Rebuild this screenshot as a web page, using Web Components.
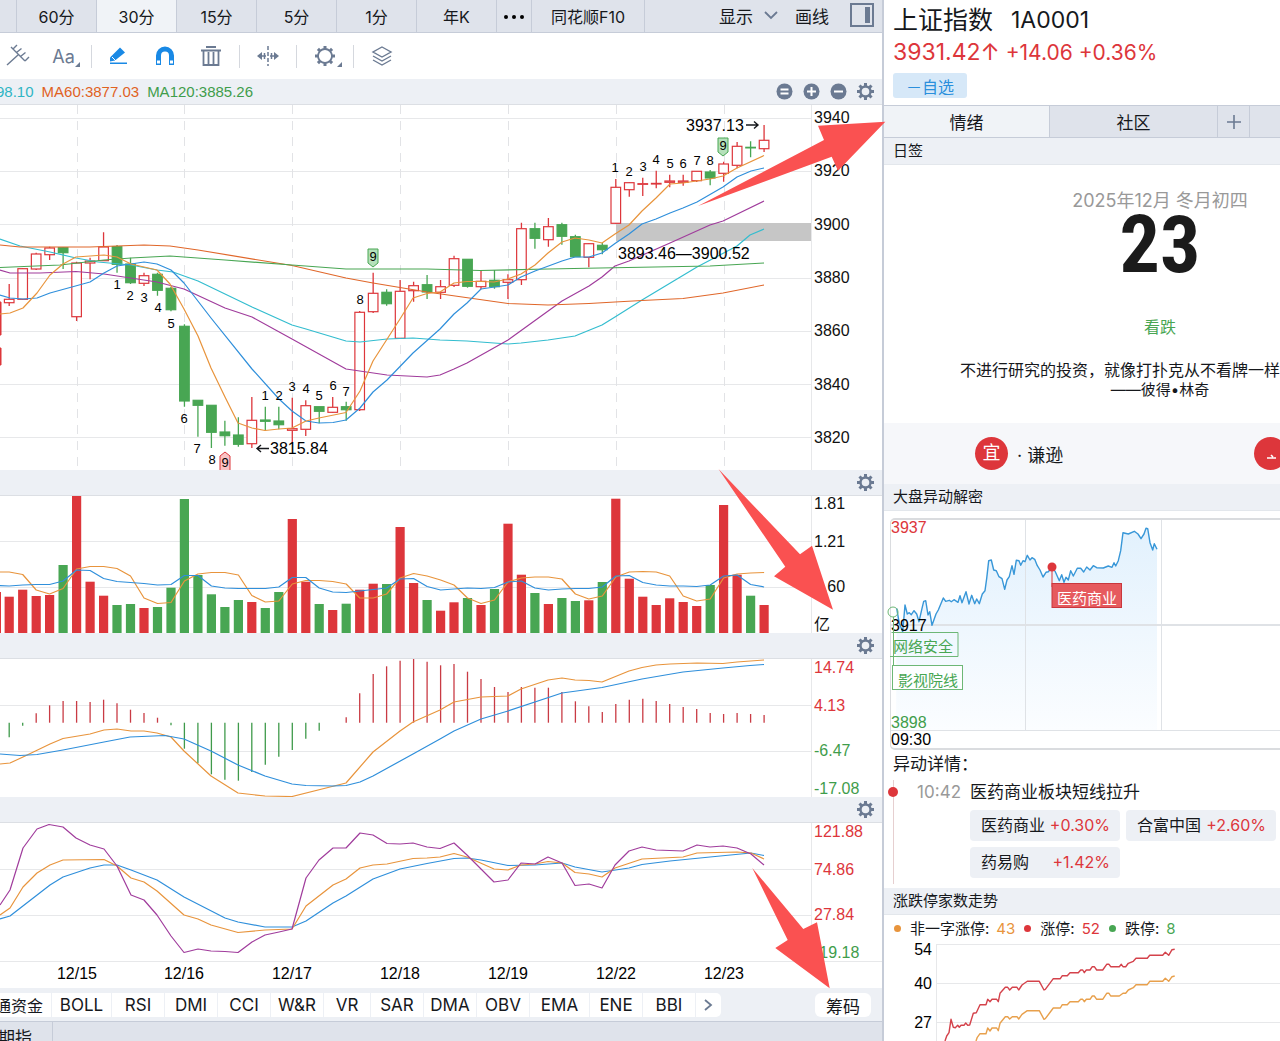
<!DOCTYPE html>
<html lang="zh-CN">
<head>
<meta charset="utf-8">
<meta name="viewport" content="width=device-width, initial-scale=1">
<title>上证指数 1A0001</title>
<style>
  :root {
    --red: #dd363b; --green: #48a653;
    --ink: #16181c; --slate: #6b7a92; --bar: #edf0f5; --tab: #dfe3eb; --line: #c6ccd8; --grid: #e7e8ea;
    --ui: Inter, "Noto Sans CJK SC", sans-serif;
    --num: "Liberation Sans", "Noto Sans CJK SC", sans-serif;
  }
  body { margin: 0; background: #fff; color: var(--ink); font-family: var(--ui); }
</style>
</head>
<body>
<stock-app></stock-app>
<script>
const BASE = `*{box-sizing:border-box} button{font:inherit;color:inherit;border:0;background:none;padding:0;margin:0;white-space:nowrap;cursor:pointer} svg{display:block}`;
function define(name, css, html, ready) {
  const tpl = document.createElement('template');
  tpl.innerHTML = `<style>${BASE}${css}</style>${html}`;
  customElements.define(name, class extends HTMLElement {
    constructor() {
      super();
      this.attachShadow({ mode: 'open' }).append(tpl.content.cloneNode(true));
    }
    connectedCallback() { if (ready) ready(this.shadowRoot, this); }
  });
}
const GEAR = (() => {
  let teeth = '';
  for (let a = 0; a < 360; a += 45) teeth += `<rect x="8" y="1" width="3" height="4" transform="rotate(${a} 9.5 9.5)"/>`;
  return `<svg width="19" height="19" viewBox="0 0 19 19" fill="#6b7a92"><circle cx="9.5" cy="9.5" r="5" fill="none" stroke="#6b7a92" stroke-width="2.4"/>${teeth}</svg>`;
})();

/* Chart helpers */
const RED = '#dd363b', GREEN = '#48a653', ORANGE = '#e8943c', BLUE = '#2f8fdb', PURPLE = '#a03c9c';
const X = i => 9.2 + 13.48 * i;
const line = (pts, color, w = 1.2) => `<polyline points="${pts}" fill="none" stroke="${color}" stroke-width="${w}" stroke-linejoin="round"/>`;
const series = (ys, color, first) => line(ys.map((y, k) => `${X(k + first).toFixed(1)},${y}`).join(' '), color);
const hline = (y, x2 = 811) => `<path d="M0 ${y}H${x2}" stroke="#e7e8ea"/>`;
const plot = (top, h, body) => `<svg class="plot" viewBox="0 ${top} 811 ${h}">${body}</svg>`;

/* high, body top, body bottom, low, direction */
const candles = [
[284,299.3,302.7,306,'r'],[268,268.7,299.3,300,'r'],[252.7,254,269,270,'r'],[246.7,248,254.7,260,'r'],[247,247.7,252.7,269,'g'],
[261.7,263,316.7,321,'r'],[257.7,261,263,279.3,'r'],[232.3,247,260.7,261,'r'],[245,246.7,264.3,272.7,'g'],[257.7,264,282.7,284,'g'],
[272.7,275.7,283.3,286,'r'],[272.7,274.3,290.3,295.7,'g'],[286.7,288.3,309.7,311.3,'g'],[324.3,326.3,401,406.7,'g'],[400.3,400.3,405.3,436.7,'g'],
[405.3,405.3,432.3,448,'g'],[420.7,432,435.7,445.7,'g'],[417.3,435,444.3,446.7,'g'],[397,420.3,443.7,448,'r'],[406.7,420,421.3,430.7,'g'],
[406.7,421,424.7,429.3,'g'],[397.7,428.7,430.3,442.7,'r'],[400.3,405.7,429.3,436,'r'],[406.7,406.7,411.3,423.3,'g'],[397,407.3,412.3,413,'r'],
[401.7,406.7,409.7,420.7,'g'],[311,312.3,409.7,411,'r'],[272.7,293.3,311.7,313,'r'],[289.3,292.3,303.7,305.7,'g'],[280,291.3,338.3,339,'r'],
[281.7,285.7,290.7,301.7,'r'],[275,284.7,292,299,'g'],[280,286.7,292.3,299,'r'],[255.7,258.7,285.3,287,'r'],[259.3,259.3,286.3,287.7,'g'],
[270.7,281.3,286.7,289.3,'r'],[270,280.3,286.7,288.7,'g'],[274.3,279.7,282.3,299,'r'],[222.7,228.7,279.7,285,'r'],[222.7,228.7,238.3,248.7,'g'],
[218,226.7,239.7,246.7,'r'],[222.7,224.7,236.3,244.7,'g'],[234.7,236.7,256.7,257,'g'],[243,243.7,257.3,267.3,'r'],[242.7,245.3,249.7,254.3,'g'],
[179,187.3,223.3,224,'r'],[182,182.7,189.7,196.7,'r'],[177.7,183.7,184.3,196,'r'],[170.7,183.4,183.7,188.3,'r'],[174.7,181,182.3,187.3,'r'],
[174.7,181,182.3,185.7,'r'],[171,171.3,180.7,182,'r'],[170,172,178,185.3,'g'],[161.7,164,173.3,181.7,'r'],[142,146.3,165.3,168.3,'r'],
[141.3,147.3,147.9,157.3,'g'],[125,140.3,148.7,152,'r']];
const counts = [[1,117,289],[2,130,300],[3,144,302],[4,158,312],[5,171,328],[6,184,423],[7,197,453],[8,212,464],[1,265,400],[2,279,400],[3,292,391],[4,306,393],[5,319,400],[6,333,390],[7,346,396],[8,360,304],[1,615,172],[2,629,176],[3,643,171],[4,656,164],[5,670,168],[6,683,168],[7,697,165],[8,710,165],[9,373,261],[9,723,150],[9,225,467]];

function drawCandles() {
  let s = '';
  for (let y = 118; y < 440; y += 53.2) s += hline(Math.round(y) + .5);
  for (let k = 5; k < 57; k += 8) s += `<path d="M${Math.round(X(k)) + .5} 105V470" stroke="#e2e3e6" stroke-dasharray="9 7"/>`;
  s += `<rect x="616" y="223" width="195" height="18" fill="#c6c6c6"/>`;
  s += `<path d="M0 302h1v33h-1zM0 348h1v17h-1z" fill="${RED}" stroke="${RED}"/>`;
  candles.forEach(([hi, t, b, lo, c], i) => {
    const x = X(i), col = c === 'r' ? RED : GREEN, h = Math.max(b - t, .6);
    s += `<path d="M${x} ${hi}V${t}M${x} ${b}V${lo}" stroke="${col}" stroke-width="1.3"/>`;
    s += `<rect x="${x - 4.8}" y="${t}" width="9.6" height="${h}" fill="${c === 'r' ? '#fff' : col}" stroke="${col}" stroke-width="1.2"/>`;
  });
  s += line('0,239 20,246 50,252 76,258 98,262 131,265 157,270 173,272 198,281 252,307 292,325 306,329 346,341 360,342 387,339 413,338 440,340 467,341 494,343 508,344 521,343 548,340 575,336 602,325 615,317 642,300 697,267 737,246 750,235 764,229', '#33bdcf');
  s += line('0,270 10,273 40,273 76,271.5 104,274 157,282 184,289 225,308 252,317 292,339 346,369 387,375 427,377 440,375 454,369 467,363 508,340 562,301 589,286 602,277 615,266 629,261 670,243 710,225 723,221 764,201', PURPLE);
  s += line('0,245 20,247 90,247 144,245 170,246 198,250 292,265.5 346,278 373,283 427,292 508,303.5 548,305 589,303.5 615,302 642,300.5 683,298.5 723,293 764,285', '#e0672a');
  s += line('0,267.5 60,265 104,260 131,258 170,256 225,260 292,265 346,269 427,269 480,270.5 548,269 600,268 710,266 764,263', GREEN);
  s += line('0,295 10,298 23,299 37,298 50,293 90,282 104,273 117,266 131,264 144,262 157,264 171,270 184,283 211,318 252,369 279,399 292,411 306,421 319,423 333,422.5 346,420 360,408 373,392 387,380 413,353 440,329 454,314 467,303 481,289 508,285 521,277 535,271 562,261 575,257 589,257 602,253 615,243.5 629,234 642,224 656,219 670,213 683,208 697,202 723,187 737,177 751,171 764,168', BLUE);
  s += line('0,314 10,313 23,308 37,293 50,275 63,264 76,257 104,255 117,257 131,264 157,270 170,284 184,309 198,336 211,368 225,397 238,423 252,428 265,430.5 279,429 292,428 306,421 319,418 346,412.5 360,391 373,361 400,319 413,298 427,293.5 440,292 454,283 467,281.5 481,281.5 494,282 508,279 521,274 535,265 548,253 562,242 575,238 589,240 602,243 615,234 629,225 642,211 656,198 670,184 683,183 710,179 723,176 737,168 764,155.5', ORANGE);
  s += `<path d="M368 249h10v14l-5 4l-5-4zM718 138h10v14l-5 4l-5-4z" fill="#b5e0ba" stroke="${GREEN}"/><path d="M220 470V456l5-4l5 4v14" fill="#f9c3c4" stroke="${RED}"/>`;
  s += '<g font-size="13" text-anchor="middle">' + counts.map(([n, x, y]) => `<text x="${x}" y="${y}">${n}</text>`).join('') + '</g>';
  s += `<g font-size="16"><text x="686" y="131">3937.13</text><text x="618" y="259">3893.46—3900.52</text><text x="270" y="454">3815.84</text></g>`;
  s += `<path d="M746 125h12m-4-3.500l4 3.500l-4 3.500M269 448.500h-12m4-3.500l-4 3.500l4 3.500" fill="none" stroke="#16181c" stroke-width="1.400"/>`;
  return plot(105, 365, s);
}
function drawVolume() {
  const tops = [596.7,589.7,596,595,565,496,581.7,595.7,605,604,608,607,587.7,499,575,594.3,607,600,602,608,592,519,581.7,604,610,603.7,589.7,583.7,584,527,583,600,610.7,602.3,598,605,589,523.7,574.7,593,604,598,601,600.3,582,498.7,578.7,596.7,605,598.3,602,606,585,505,574.7,595.7,605];
  const dir = 'rrrrgrrrggrgggggggrggrrgrgrrgrrgrrgrgrrgrggrgrrrrrrrgrrgr';
  let s = hline(541.5) + hline(587.5) + `<rect x="0" y="592" width="1" height="41" fill="${RED}"/>`;
  tops.forEach((t, i) => s += `<rect x="${(X(i) - 4.6).toFixed(1)}" y="${t}" width="9.2" height="${633 - t}" fill="${dir[i] === 'r' ? RED : GREEN}"/>`);
  s += series([572,572,574.5,590,594,588.5,569,566.5,566.5,568.5,576,598,603.5,602.5,581,574,572.5,572.5,575,595.5,602,601,584,580.5,580.5,581.5,584,598,598,594,578,573.5,576,580,585,598,603.5,600,582,578,577,577,579,594,599,596,577,572,571.5,572,576,596,601,599,578,574,573,572.5], ORANGE, -1);
  s += series([585.5,586,585,584.5,584.5,581,570,570.5,578.5,581.5,582.5,583.5,585,584.5,575.5,575.5,586,588,588.5,588.5,588.5,587,577.5,577.5,588,592,592.5,591,589.5,588,579,578.5,586.5,590,589,588,588.5,587.5,582,581,588,590,589,588.5,588.5,587,576,575.5,582.5,585,586,586,586.5,585,576,575,584.5,587], BLUE, -1);
  return plot(496, 137, s);
}
function drawMacd() {
  const ends = [737.3,725.7,713.3,705.3,701,701,702,699.7,703.3,709.7,713,717.7,725.3,748.7,763.3,774.3,779.7,780.7,772,764.7,756.7,750,738.7,730.7,722.7,717.3,693.3,674,666.3,660.7,658.7,661.7,665.3,664,671.7,679,687,692,687,687.7,687.7,692,701.3,706.3,712,704,699.7,698.7,701,704,707,709,713,714,713,714,715];
  let s = hline(705.5) + hline(751.5);
  ends.forEach((e, i) => s += `<path d="M${X(i).toFixed(1)} 722.700V${e}" stroke="${e < 722.7 ? '#c93b44' : '#3f9a4b'}" stroke-width="1.300"/>`);
  s += line('0,764 10,763 23,757 50,744 63,738.5 90,734 104,730 117,729 131,731 144,731 157,733 171,737 184,751 211,776 238,793 265,796 292,796.5 346,783 373,752 400,731 413,722 440,710 454,702 481,697 508,696 521,689 548,680 562,678 575,680 589,680.5 602,682 629,671 642,667.5 656,665 670,664 697,663 723,663.5 737,662 764,660', ORANGE);
  s += line('0,754 20,755.5 37,754.5 63,750 104,742 130,737 165,735.5 184,739 211,751 238,765 265,776 292,784 306,785.5 333,786 346,785.5 360,782 373,776 413,754 440,739 454,731 481,719 508,711 562,693 602,687.5 642,679 683,672 723,668 750,665.5 764,664.5', BLUE);
  return plot(659, 138, s);
}
function drawKdj() {
  let s = hline(869.5) + hline(915.5);
  s += line('0,919 10,916 50,885 63,877 90,868 104,865 117,865 131,870 157,880 184,897 225,918 238,922 265,927 292,927 306,921 333,903 346,896 373,879 400,869 427,863.5 454,858.5 467,858 481,860 508,865.5 535,865 562,863 575,867 602,872 629,868 642,864.5 670,861 710,857 751,853 764,855.5', BLUE);
  s += line('0,915 10,908 23,887 37,873 50,865 63,860 104,859.5 117,866 131,878 144,882 157,891 184,915 198,919 211,925 238,932.5 265,930 292,929 306,906 333,885 346,879 360,868 373,865 387,864 413,858.5 427,858 440,857 454,853.5 467,857 494,869 508,870 521,865 535,864 548,861.5 562,863 575,872.5 589,874 602,877 615,868 642,859 683,857 697,853 737,852 751,853 764,859', ORANGE);
  s += line('0,905 10,890 23,848 37,829 49,824.5 63,827 76,838 90,845 104,849 117,866 131,895 144,900 157,915 171,936 184,952.5 198,949 211,951 225,951.5 238,952.5 252,942 265,935 279,932 292,929 306,878 319,860 333,848 346,848 360,833 373,835 387,843.5 400,844 413,843 427,847 440,848.5 454,843 467,855 481,869 494,882 508,880 521,863 535,864 548,857 562,863 575,885.5 589,884 602,888 615,865 629,851 642,847 656,850 683,851 697,845 710,847 723,846 737,848 751,854 764,865', PURPLE);
  return plot(823, 138, s);
}
const drawDates = () => plot(962, 26, '<g font-size="16" text-anchor="middle">' + ['12/15','12/16','12/17','12/18','12/19','12/22','12/23'].map((d, k) => `<text x="${X(5 + 8 * k).toFixed(0)}" y="979">${d}</text>`).join('') + '</g>');

define('chart-pane', `
  :host{display:flex;font-family:var(--num);color:#111;background:#fff}
  .plot{width:100%;height:auto;overflow:hidden}
  .area{flex:1;min-width:0}
  .axis{flex:0 0 71px;border-left:1px solid var(--grid);font-size:16px;line-height:16px;padding-left:2px}
  :host([kind=candles]) .axis{display:flex;flex-direction:column;justify-content:space-between;padding-top:5px;padding-bottom:24px}
  .thirds{display:grid;grid-template-rows:repeat(3,1fr)}
  .thirds span{grid-column:1;height:16px}
  .thirds span:nth-child(1){grid-row:1}
  .thirds span:nth-child(2){grid-row:2;margin-top:-8px}
  .thirds span:nth-child(3){grid-row:3;margin-top:-8px}
  .thirds span:nth-child(4){grid-row:3;align-self:end}
  :host([signed]) .axis{padding-top:1px}
  .up{color:var(--red)} .down{color:#3f9d4b}
  :host([kind=dates]) .axis{border-color:transparent}
  :host([kind=dates]){border-top:1px solid var(--grid)}
`, '<div class="area"></div><div class="axis"></div>', (root, host) => {
  const kind = host.getAttribute('kind');
  const draw = { candles: drawCandles, volume: drawVolume, macd: drawMacd, kdj: drawKdj, dates: drawDates }[kind];
  root.querySelector('.area').innerHTML = draw();
  const axis = root.querySelector('.axis'), signed = host.hasAttribute('signed');
  const labels = (host.getAttribute('labels') || '').split(' ').filter(Boolean);
  if (labels.length === 4) axis.classList.add('thirds');
  axis.innerHTML = labels.map(t => `<span${signed ? ` class="${t[0] === '-' ? 'down' : 'up'}"` : ''}>${t}</span>`).join('');
});

define('pane-head', `
  :host{display:flex;align-items:center;height:26px;background:var(--bar);border-bottom:1px solid #dcdfe4;padding-right:7px;font:15px/20px var(--num);overflow:hidden}
  ::slotted(*){white-space:nowrap}
  .space{flex:1} .tools{display:flex;gap:8px;align-items:center}
  .zoom{display:none;gap:8px} :host([zoom]) .zoom{display:flex}
`, `<slot></slot><div class="space"></div><div class="tools"><div class="zoom">
  ${[['重置', 'M5.500 7.500h8M5.500 11.500h8'], ['放大', 'M5 9.500h9M9.500 5v9'], ['缩小', 'M5 9.500h9']].map(([n, d]) => `<button aria-label="${n}"><svg width="19" height="19"><circle cx="9.500" cy="9.500" r="8" fill="#6b7a92"/><path d="${d}" stroke="#fff" stroke-width="2"/></svg></button>`).join('')}
  </div><button aria-label="设置">${GEAR}</button></div>`);

define('period-tabs', `
  :host{display:flex;height:33px;background:var(--tab);border-bottom:1px solid var(--line);font-size:16px;overflow:hidden}
  button{flex:0 0 80px;border-right:1px solid var(--line)}
  .edge{flex-basis:17px} .on{background:#f0f3f7} .more{flex-basis:35px} .f10{flex-basis:113px}
  .right{display:flex;align-items:center;margin-left:auto;padding:0 8px 2px 0;font-size:17px}
  .right button{flex:none;border:0;display:flex;align-items:center}
  .show{gap:11px;margin-right:17px} .draw{margin-right:21px}
  .more svg{margin:auto}
`, `<button class="edge" aria-label="上一周期"></button><button>60分</button><button class="on">30分</button><button>15分</button><button>5分</button><button>1分</button><button>年K</button>
  <button class="more" aria-label="更多"><svg width="22" height="6"><circle cx="3" cy="4" r="2"/><circle cx="11" cy="4" r="2"/><circle cx="19" cy="4" r="2"/></svg></button><button class="f10">同花顺F10</button>
  <div class="right"><button class="show" aria-haspopup="menu">显示<svg width="14" height="9" fill="none" stroke="#6b7a92" stroke-width="1.800"><path d="M1 1l6 6l6-6"/></svg></button><button class="draw">画线</button>
  <button aria-label="侧栏"><svg width="24" height="24"><rect x="1" y="1" width="22" height="22" fill="none" stroke="#6b7a92" stroke-width="2"/><path d="M15 4h5v16h-5z" fill="#6b7a92"/></svg></button></div>`);

const gearThin = (() => {
  let t = '';
  for (let a = 0; a < 360; a += 45) t += `<path d="M12 5V2" stroke-width="3" transform="rotate(${a} 12 12)"/>`;
  return `<svg width="24" height="24" fill="none" stroke="#6b7a92" stroke-width="1.800"><circle cx="12" cy="12" r="7"/>${t}</svg>`;
})();
define('draw-tools', `
  :host{display:flex;align-items:center;height:46px;background:#fff;color:var(--slate)}
  button{position:relative;width:46px;height:30px;display:flex;align-items:center;justify-content:center}
  .fork{width:36px} .wide{width:56px} .aa{width:55px;font-size:18px}
  i{width:1px;height:23px;background:#d5d8de} .set{display:flex;padding:0 5px 0 4px}
  .menu::after{content:"";position:absolute;right:11px;bottom:4px;border-left:5px solid transparent;border-bottom:5px solid var(--slate)}
`, `<button class="fork" aria-label="音叉线"><svg width="24" height="24" fill="none" stroke="#6b7a92" stroke-width="1.400"><path d="M1 21L12 11M7 5L19 17M7 5l4-4M10.500 8.500l5-4M14.500 12.500l5-4M19 17l4-4M7 5l-2-2"/></svg></button>
  <button class="aa menu">Aa</button><i></i>
  <div class="set"><button aria-label="画笔"><svg width="20" height="20" fill="#1989e5"><path d="M1 11.500L11 1.500l5 5L6 14.500l-5 1z"/><path d="M1 16.500h17v1.500h-17z"/><path d="M3 11l4 4" stroke="#fff"/></svg></button>
  <button aria-label="磁吸"><svg width="20" height="20" fill="none" stroke="#1989e5"><path d="M3.500 19V9.500a6.500 6.500 0 0 1 13 0V19" stroke-width="5"/><path d="M2 14.500h3v3h-3zM15 14.500h3v3h-3z" fill="#fff" stroke="none"/></svg></button>
  <button aria-label="删除"><svg width="22" height="22" fill="none" stroke="#6b7a92" stroke-width="1.800"><path d="M6 2h10M1 5.500h20M3.500 5.500V20h15V5.500M8.500 7v12M13.500 7v12"/></svg></button></div><i></i>
  <button class="wide" aria-label="左右平移"><svg width="24" height="22" fill="#6b7a92" stroke="#6b7a92"><path d="M12 1v20" stroke-width="1.500" stroke-dasharray="4 2"/><path d="M1 11l5-4v8zM23 11l-5-4v8z" stroke="none"/><path d="M5 11h5M19 11h-5M8.500 8v6M15.500 8v6" stroke-width="1.500"/></svg></button><i></i>
  <button class="wide menu" aria-label="画线设置">${gearThin}</button><i></i>
  <button class="wide" aria-label="图层"><svg width="22" height="22" fill="none" stroke="#6b7a92" stroke-width="1.400"><path d="M11 2l9 5l-9 5l-9-5zM2 11l9 5l9-5M2 15l9 5l9-5"/></svg></button>`);

define('indicator-bar', `
  :host{display:flex;justify-content:space-between;padding:5px 11px 5px 0;height:34px;background:var(--bar);font-size:17px;border-bottom:1px solid var(--line)}
  nav{display:flex;gap:1px} button{background:#fff;width:52px;height:24px;flex:none;color:#16181c}
  .first{display:flex;justify-content:flex-end;align-items:center;width:51px;padding-right:8px;overflow:hidden;font-size:16px}
  .w{width:59px} .s{width:46px} .next{width:25px;border-radius:0 5px 5px 0} .next svg{margin:auto}
  .chip{width:56px;border-radius:6px}
`, `<nav><button class="first">通资金</button><button class="w">BOLL</button><button>RSI</button><button>DMI</button><button>CCI</button><button>W&amp;R</button><button class="s">VR</button><button>SAR</button><button>DMA</button><button>OBV</button><button class="w">EMA</button><button>ENE</button><button>BBI</button><button class="next" aria-label="更多指标"><svg width="9" height="14" fill="none" stroke="#6b7a92" stroke-width="1.800"><path d="M1 2l6 5l-6 5"/></svg></button></nav><button class="chip">筹码</button>`);

define('call-arrows', `
  :host{position:absolute;inset:0;pointer-events:none;z-index:2}
  svg{width:100%;height:auto;overflow:visible}
`, `<svg viewBox="0 0 882 1041" fill="#fa5151"><path d="M698 206L824 140L818 125.700L885.300 121.700L838 170.700L831.700 156.700zM718.500 469L800 554.300L812 545.700L833 609.700L774 576.300L785.300 566.700zM752.300 868L803.300 929L817 922.300L829.700 988.300L775.300 948L787.700 940z"/></svg>`);

define('chart-side', `
  :host{position:relative;display:flex;flex-direction:column;flex:1;min-width:0}
  .cut{margin-left:-4px;color:#2fb5c4} .ma{margin-left:8px}
  .foot{flex:1;min-height:20px;background:var(--tab);display:flex;overflow:hidden}
  .foot button{width:53px;display:flex;justify-content:flex-end;padding:4px 20px 0 0;border-right:1px solid var(--line);font-size:17px;line-height:24px;height:100%}
`, `<period-tabs></period-tabs><draw-tools></draw-tools>
  <pane-head zoom><span class="cut">98.10</span><span class="ma" style="color:#e0621f">MA60:3877.03</span><span class="ma" style="color:#3f9d4b">MA120:3885.26</span></pane-head>
  <chart-pane kind="candles" labels="3940 3920 3900 3880 3860 3840 3820"></chart-pane>
  <pane-head></pane-head><chart-pane kind="volume" labels="1.81 1.21 0.60 亿"></chart-pane>
  <pane-head></pane-head><chart-pane kind="macd" signed labels="14.74 4.13 -6.47 -17.08"></chart-pane>
  <pane-head></pane-head><chart-pane kind="kdj" signed labels="121.88 74.86 27.84 -19.18"></chart-pane>
  <chart-pane kind="dates"></chart-pane>
  <indicator-bar></indicator-bar><div class="foot"><button>期指</button></div>
  <call-arrows></call-arrows>`);

/* Right column */
define('quote-head', `
  :host{display:block;height:105px;padding:4px 9px 0;overflow:hidden}
  h1{margin:0;font-weight:400;font-size:25px;line-height:32px;display:flex;gap:18px;white-space:nowrap}
  h1 span{font-size:23px} p{margin:0;color:var(--red);line-height:32px;font-size:21px;white-space:nowrap}
  b{font-weight:400;font-size:23px}
  button{display:block;background:#d6e8f8;color:#2a8fdc;border-radius:3px;width:74px;height:25px;font-size:16px;margin-top:4px}
`, `<h1>上证指数 <span>1A0001</span></h1><p><b>3931.42↑</b> +14.06 +0.36%</p><button>－自选</button>`);
define('side-tabs', `
  :host{display:flex;height:33px;border:solid var(--line);border-width:1px 0;background:var(--tab);font-size:17px}
  button{flex:0 0 168px;border-right:1px solid var(--line)} .on{flex-basis:166px;background:#f0f3f7} .add{flex-basis:32px} svg{margin:auto}
`, `<button class="on">情绪</button><button>社区</button><button class="add" aria-label="添加"><svg width="14" height="14" stroke="#6b7a92" stroke-width="1.600"><path d="M0 7h14M7 0v14"/></svg></button>`);
define('section-head', `:host{display:block;height:27px;line-height:26px;font-size:15px;padding-left:9px;background:var(--bar);border-bottom:1px solid #e3e7ec}`, `<slot></slot>`);
define('day-card', `
  :host{display:block} .body{height:258px;padding-top:24px}
  .mid{margin-left:156px;text-align:center} .date{color:#999;font-size:18px;line-height:23px}
  .day{font:bold 80px/66px "Liberation Sans Narrow","Roboto Condensed",Roboto,sans-serif;color:#1b1b1b}
  .view{color:var(--green);font-size:16px;line-height:20px;margin-top:39px}
  .say{font-size:16px;line-height:20px;text-align:right;margin-top:23px;white-space:nowrap}
  .who{font-size:15px;line-height:20px}
  .luck{display:flex;align-items:center;height:61px;padding-left:91px;background:#f6f7fa;font-size:18px;overflow:hidden}
  .dot{flex:none;width:33px;height:33px;border-radius:50%;background:var(--red);color:#fff;text-align:center;line-height:32px;margin-right:9px}
  .luck svg{margin-left:auto}
`, `<div class="body"><div class="mid date">2025年12月 冬月初四</div><div class="mid day">23</div><div class="mid view">看跌</div><div class="say">不进行研究的投资，就像打扑克从不看牌一样</div><div class="mid who">——彼得•林奇</div></div>
  <div class="luck"><span class="dot">宜</span><span>· 谦逊</span><svg width="26" height="33"><circle cx="16.500" cy="16.500" r="16.500" fill="#dd363b"/><path d="M13 21h9M17 18l2 2" stroke="#fff" stroke-width="1.600"/></svg></div>`);

/* Line data is stored at three units to the pixel, from the given origin */
const at = (pts, ox, oy) => pts.split(' ').map(p => { const [x, y] = p.split(',').map(Number); return `${(ox + x / 3).toFixed(1)},${(oy + y / 3).toFixed(1)}`; }).join(' ');
define('move-chart', `
  :host{display:block;padding:7px 0 0 6px} .box{border:1px solid #dadcdf;border-width:2px 0 2px 1px;border-radius:5px 0 0 5px;height:232px}
  svg{width:390px;height:228px;font-family:var(--num);overflow:visible}
`, `<div class="box"></div>`, root => {
  const p = at('50,385 58,430 68,455 75,375 82,402 88,398 94,404 102,392 110,402 117,425 126,385 131,364 137,362 144,405 149,395 156,436 168,402 175,390 190,354 197,364 208,361 214,365 222,359 234,367 240,347 246,368 258,335 267,372 275,346 284,371 290,357 298,371 307,342 315,332 320,295 326,242 334,240 341,270 349,272 357,290 366,296 374,328 381,300 388,290 396,257 402,283 409,241 417,242 422,256 429,242 435,245 442,226 450,240 456,233 464,238 472,257 480,270 489,291 498,277 505,275 516,262 526,275 538,302 545,284 552,307 558,292 565,300 572,272 580,288 592,265 602,265 611,276 620,261 630,270 640,257 650,263 670,264 685,258 696,262 702,248 707,258 715,242 722,212 729,158 745,162 763,154 774,162 783,176 792,162 798,145 803,146 810,188 818,210 823,191 831,208', 880, 480);
  root.querySelector('.box').innerHTML = `<svg viewBox="891 520 390 228"><defs><linearGradient id="f" x1="0" y1="0" x2="0" y2="1"><stop offset="0" stop-color="#e2f1fd"/><stop offset="1" stop-color="#fbfdff"/></linearGradient></defs>
  <polygon points="${p} 1157,730 896,730" fill="url(#f)"/>
  <path d="M1025.500 520V730M1161.500 520V730M891 730.500H1281" stroke="#dfe2e6"/><path d="M891 625H1281" stroke="#dfe2e6" stroke-width="2"/>
  ${line(p, '#3897d8', 1.4)}
  <g font-size="16"><text x="891" y="533" fill="#dd363b">3937</text><text x="891" y="631">3917</text><text x="891" y="728" fill="#3f9d4b">3898</text><text x="891" y="745">09:30</text></g>
  <g fill="none" stroke="#6db776"><circle cx="893" cy="612" r="5"/><path d="M893.500 617V665"/><path d="M891.500 632.500H958V656.500H890" /><rect x="892.500" y="665.500" width="70" height="24" fill="#fff" fill-opacity=".8"/></g>
  <g font-size="15" style="font-family:var(--ui)"><text x="893" y="652" fill="#48a653">网络安全</text><text x="898" y="686" fill="#48a653">影视院线</text>
  <path d="M1052 567v20" stroke="#dd363b"/><circle cx="1052" cy="567" r="4.500" fill="#dd363b"/><rect x="1052" y="583.500" width="69.500" height="24" fill="#e65a5e" stroke="#c9373d"/><text x="1057" y="604" fill="#fff">医药商业</text></g></svg>`;
});
define('move-detail', `
  :host{display:block;height:138px;padding:4px 0 0 9px;overflow:hidden}
  h2{margin:0;font-weight:400;font-size:17px;line-height:20px}
  .row{display:grid;grid-template-columns:68px 1fr;column-gap:9px;margin:6px 0 0 -5px;padding-left:5px;height:104px;background:linear-gradient(#e6cfd0,#e6cfd0) 5px 0/1px 100% no-repeat}
  .time{color:#999;font-size:17px;line-height:24px;display:flex;align-items:center;justify-content:space-between;height:24px}
  .time::before{content:"";width:10px;height:10px;border-radius:50%;background:var(--red);margin-left:-5px}
  .what{font-size:17px;line-height:24px;white-space:nowrap}
  .chips{display:flex;flex-wrap:wrap;gap:6px;margin-top:6px}
  .chips span{display:flex;justify-content:space-between;width:150px;height:31px;line-height:31px;padding:0 10px 0 11px;border-radius:4px;background:var(--bar);font-size:16px}
  em{font-style:normal;color:var(--red)}
`, `<h2>异动详情：</h2><div class="row"><div class="time">10:42</div><div><div class="what">医药商业板块短线拉升</div><div class="chips"><span>医药商业<em>+0.30%</em></span><span>合富中国<em>+2.60%</em></span><span>药易购<em>+1.42%</em></span></div></div></div>`);
define('limit-chart', `
  :host{display:block;overflow:hidden}
  .legend{display:flex;height:27px;line-height:27px;padding-left:10px;font-size:15px;white-space:nowrap}
  .legend span{display:flex;align-items:center;margin-right:9px} .legend span::before{content:"";width:7px;height:7px;border-radius:50%;background:var(--c);margin-right:9px}
  em{font-style:normal;color:var(--c);margin-left:7px}
  svg{width:396px;height:99px;font:16px var(--num)}
`, `<div class="legend"><span style="--c:#e8943c">非一字涨停:<em>43</em></span><span style="--c:#dd363b">涨停:<em>52</em></span><span style="--c:#48a653">跌停:<em>8</em></span></div><div class="c"></div>`, root => {
  const limitUp = at('195,873 200,858 207,848 213,808 220,832 226,833 233,826 238,832 243,826 252,826 257,819 263,826 269,825 280,790 289,788 300,764 318,764 323,748 330,755 336,748 350,748 355,755 360,730 376,712 383,712 389,720 397,712 411,712 416,720 426,705 442,694 478,694 492,720 496,718 520,686 541,686 547,677 562,677 570,668 595,668 602,660 608,660 613,668 619,660 630,660 637,650 643,650 650,660 668,660 680,643 687,643 692,650 718,650 724,643 729,650 737,650 745,640 760,634 768,625 802,625 809,616 848,616 856,607 866,616 876,599 884,598', 880, 750);
  const opened = at('288,873 292,862 300,851 318,851 323,834 330,843 336,834 350,834 355,842 360,820 376,800 383,800 389,807 397,800 411,800 416,807 426,793 442,782 478,782 492,808 496,806 520,774 541,774 547,764 562,764 570,755 595,755 602,748 608,748 613,755 619,748 630,748 637,738 643,738 650,748 668,748 680,730 687,730 692,738 718,738 729,730 737,730 745,720 760,713 768,704 802,704 809,694 848,694 856,685 866,694 876,680 884,678', 880, 750);
  root.querySelector('.c').innerHTML = `<svg viewBox="884 942 396 99"><path d="M936 944.500H1280M936 983.500H1280M936 1022.500H1280M936.500 944V1041" stroke="#e7e8ea"/>
  ${line(limitUp, '#d4424b', 1.4)}${line(opened, '#e8a04c', 1.4)}<g text-anchor="end"><text x="932" y="955">54</text><text x="932" y="989">40</text><text x="932" y="1028">27</text></g></svg>`;
});
define('mood-side', `:host{display:block;flex:0 0 398px;border-left:2px solid var(--line);background:#fff;overflow:hidden}`,
`<quote-head></quote-head><side-tabs></side-tabs><section-head>日签</section-head><day-card></day-card><section-head>大盘异动解密</section-head><move-chart></move-chart><move-detail></move-detail><section-head>涨跌停家数走势</section-head><limit-chart></limit-chart>`);
define('stock-app', `:host{display:flex;min-height:100vh;overflow:hidden}`, `<chart-side></chart-side><mood-side></mood-side>`);
</script>
</body>
</html>
